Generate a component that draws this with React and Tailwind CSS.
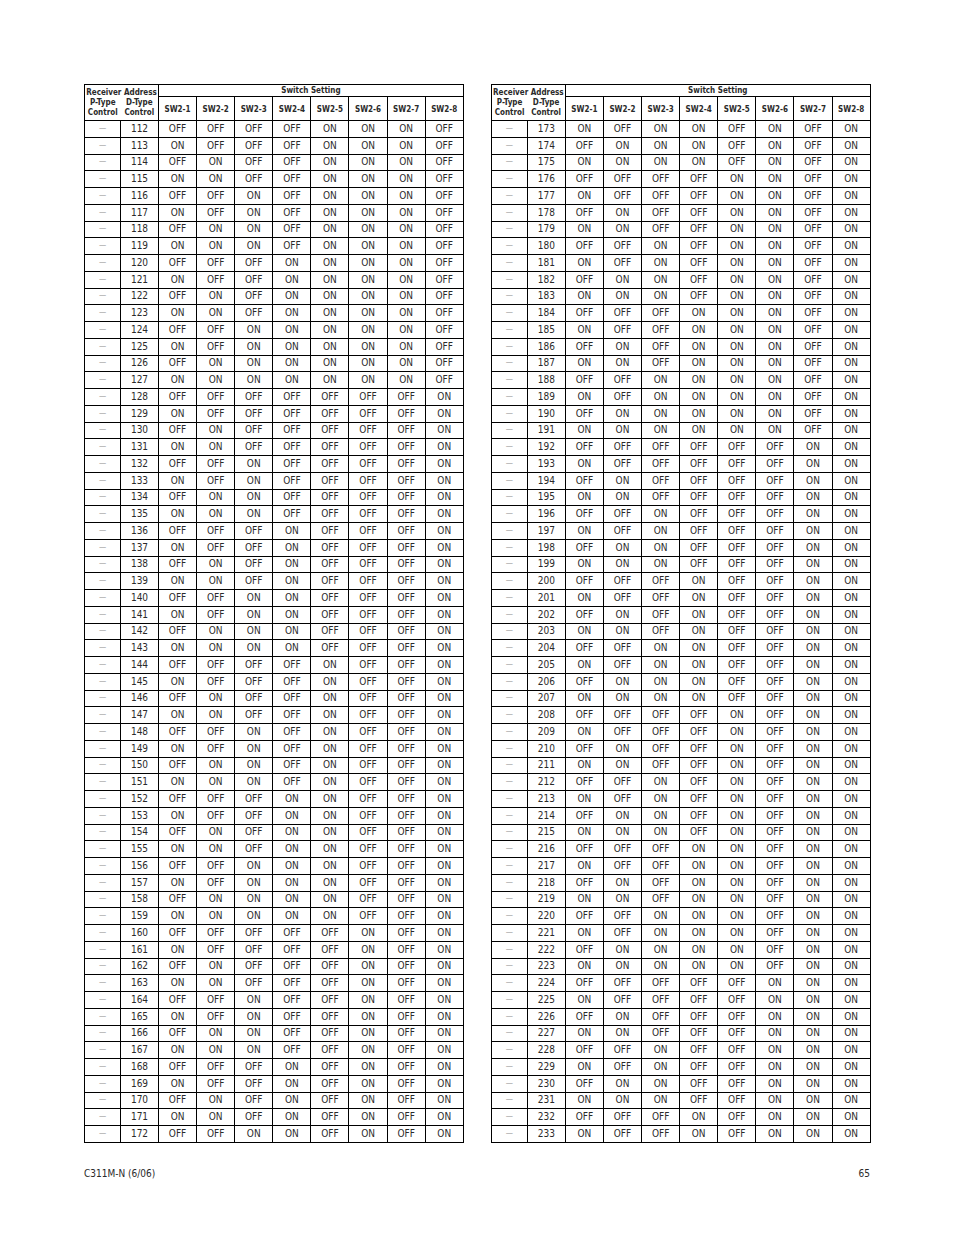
const SWITCHES = [1, 2, 3, 4, 5, 6, 7, 8];

function bits(addr) {
  return SWITCHES.map((_, i) => ((addr >> i) & 1 ? 'ON' : 'OFF'));
}

function range(from, to) {
  const out = [];
  for (let a = from; a <= to; a++) out.push(a);
  return out;
}

function AddressTable({ from, to }) {
  return (
    <table className="w-[379px] table-fixed border-collapse border border-black text-[#2a2a2a]">
      <colgroup>
        <col className="w-[36px]" />
        <col className="w-[38px]" />
        {SWITCHES.map((n) => (
          <col key={n} className="w-[38.1px]" />
        ))}
      </colgroup>
      <thead>
        <tr className="h-[12px]">
          <th colSpan={2} className="border-r border-black p-0 pt-[1px] text-center align-bottom text-[8px] font-bold leading-none">
            Receiver Address
          </th>
          <th colSpan={8} className="border-b border-black p-0 text-center align-middle text-[8px] font-bold leading-none">
            Switch Setting
          </th>
        </tr>
        <tr className="h-[24px] border-b border-black">
          <th className="p-0 pt-[1px] text-center align-top text-[8px] font-bold leading-[10px]">
            P-Type
            <br />
            Control
          </th>
          <th className="border-r border-black p-0 pt-[1px] text-center align-top text-[8px] font-bold leading-[10px]">
            D-Type
            <br />
            Control
          </th>
          {SWITCHES.map((n) => (
            <th key={n} className="border-r border-black p-0 pt-[2px] text-center align-middle text-[8px] font-bold leading-none">
              SW2-{n}
            </th>
          ))}
        </tr>
      </thead>
      <tbody>
        {range(from, to).map((addr) => (
          <tr key={addr} className="h-[16.75px] border-b border-black">
            <td className="border-r border-black p-0 text-center text-[8px] leading-none text-[#a0a0a0]">—</td>
            <td className="border-r border-black p-0 text-center text-[10px] leading-none">{addr}</td>
            {bits(addr).map((v, i) => (
              <td key={i} className="border-r border-black p-0 text-center text-[10px] leading-none">
                {v}
              </td>
            ))}
          </tr>
        ))}
      </tbody>
    </table>
  );
}

export default function App() {
  return (
    <div className="h-[1235px] w-[954px] bg-white pl-[84px] pt-[84px] font-['Liberation_Sans_Narrow','DejaVu_Sans_Condensed',sans-serif]">
      <div className="flex gap-[27px]">
        <AddressTable from={112} to={172} />
        <AddressTable from={173} to={233} />
      </div>
      <div className="mt-[23px] flex w-[786px] justify-between text-[10px] text-[#2a2a2a]">
        <span>C311M-N (6/06)</span>
        <span>65</span>
      </div>
    </div>
  );
}
